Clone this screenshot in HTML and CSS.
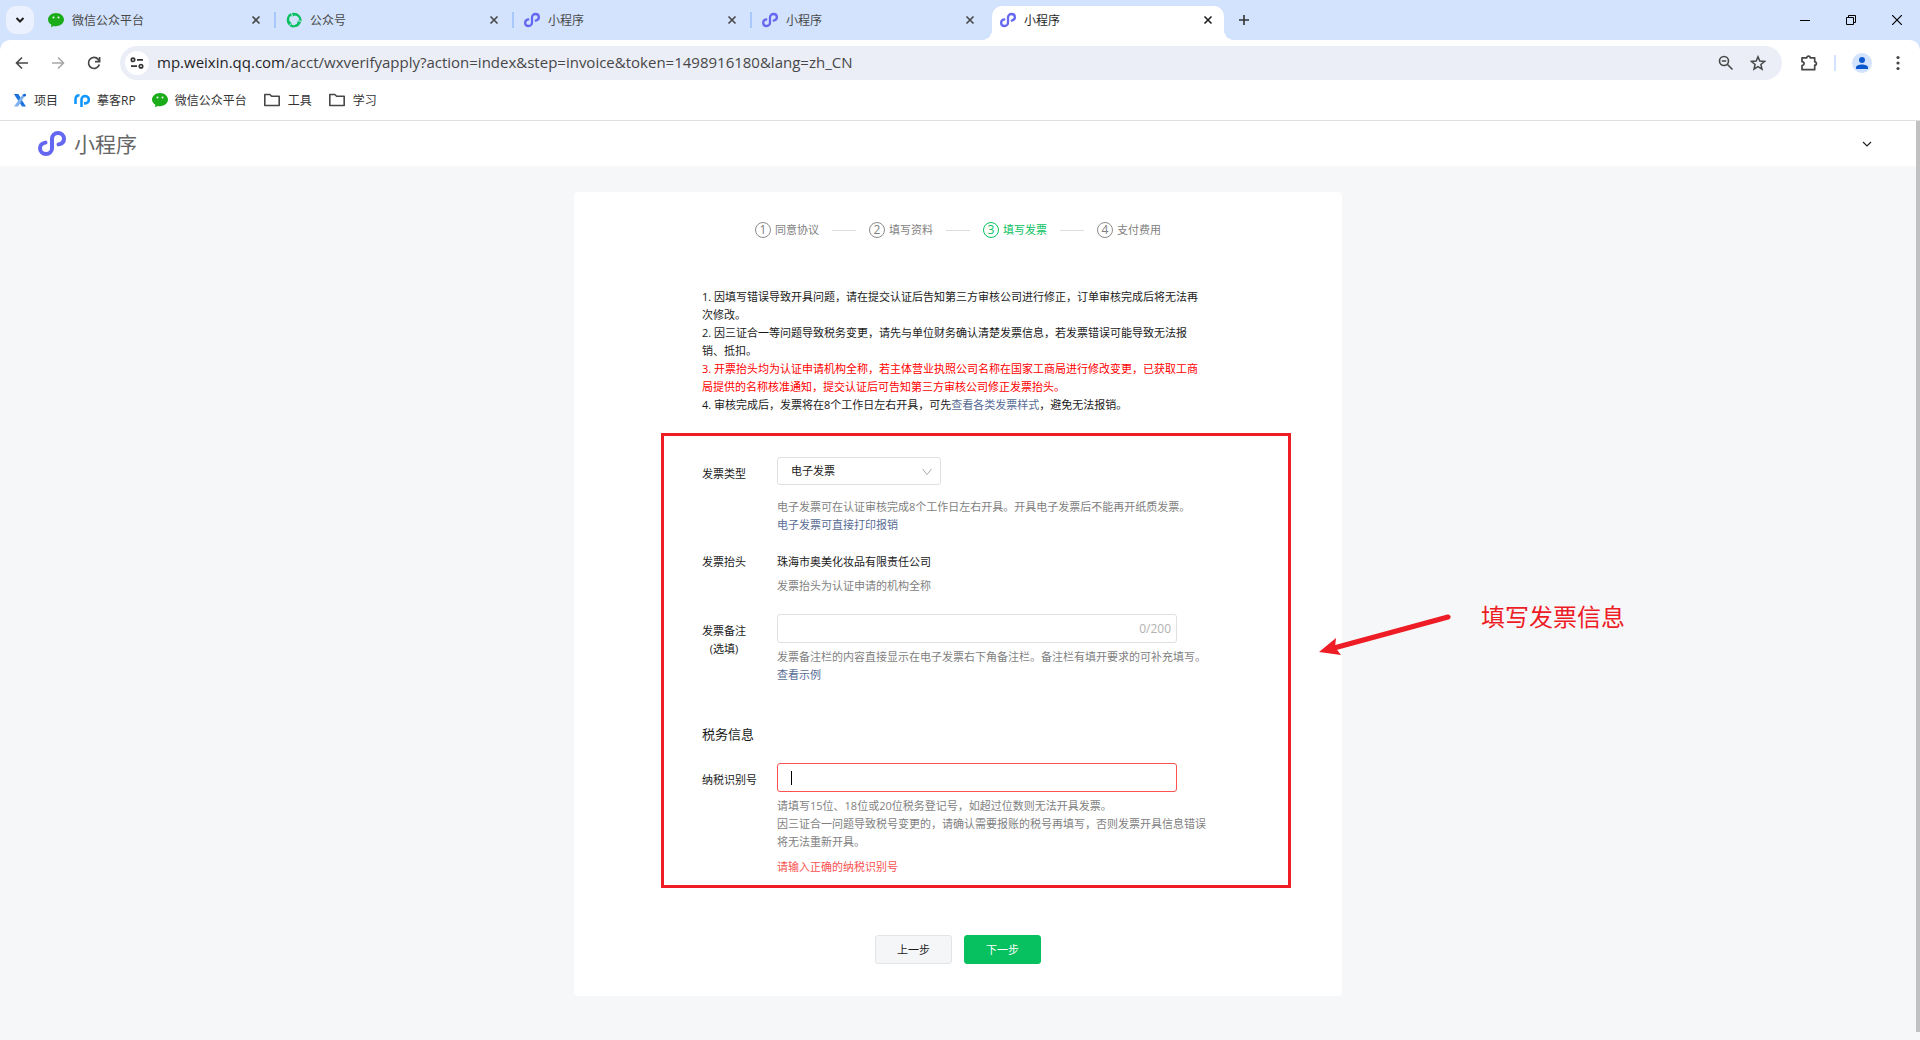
FILE: index.html
```html
<!DOCTYPE html>
<html lang="zh-CN">
<head>
<meta charset="utf-8">
<title>小程序</title>
<link rel="stylesheet" href="styles.css">
</head>
<body>
<svg class="sprite" aria-hidden="true">
  <symbol id="wechat" viewBox="0 0 16 16">
    <path fill="#1aad19" d="M8 1c4.400 0 8 2.900 8 6.600s-3.600 6.600-8 6.600c-.8 0-1.600-.1-2.300-.3L3 15.200l.4-2.400C1.300 11.600 0 9.700 0 7.600 0 3.900 3.600 1 8 1z"/>
    <circle cx="5.500" cy="5.500" r="1" fill="#fff"/><circle cx="10.500" cy="5.500" r="1" fill="#fff"/>
  </symbol>
  <symbol id="mini" viewBox="0 0 28 25">
    <path fill="none" stroke="#6467f0" stroke-width="4" stroke-linecap="round" d="M20.500 13.400C24 12.800 26 10.500 26 7.800 26 4.500 23.400 2 20 2S14 4.600 14 7.800V17.200C14 20.400 11.400 23 8 23S2 20.500 2 17.200C2 14.500 4 12.200 7.500 11.600"/>
  </symbol>
  <symbol id="close" viewBox="0 0 10 10"><path d="M1.500 1.500l7 7M8.500 1.500l-7 7" stroke="currentColor" stroke-width="1.600" fill="none"/></symbol>
  <symbol id="folder" viewBox="0 0 18 14"><path d="M1.800 1.500h5l1.800 1.800h7.600v9.200H1.800z" fill="none" stroke="#474747" stroke-width="1.600" stroke-linejoin="round"/></symbol>
</svg>

<header class="browser">
  <div class="tabstrip">
    <button class="tab-search" aria-label="搜索标签页"><svg width="10" height="8" viewBox="0 0 10 8"><path d="M1.500 2L5 5.500 8.500 2" fill="none" stroke="#1f1f1f" stroke-width="2"/></svg></button>
    <nav class="tabs">
      <div class="tab"><svg class="favicon"><use href="#wechat"/></svg><span class="tab-title">微信公众平台</span><button class="tab-close" aria-label="关闭"><svg><use href="#close"/></svg></button></div>
      <div class="tab"><svg class="favicon" viewBox="0 0 16 16"><g fill="none" stroke="#07c160" stroke-width="2.200" stroke-linecap="round"><path d="M5 11.600C.2 9.500 1.400 2 7.600 1.800 9.600 1.700 11 2.400 11.800 3.400"/><path d="M5 11.600C.2 9.500 1.400 2 7.600 1.800 9.600 1.700 11 2.400 11.800 3.400" transform="rotate(120 8 8)"/><path d="M5 11.600C.2 9.500 1.400 2 7.600 1.800 9.600 1.700 11 2.400 11.800 3.400" transform="rotate(240 8 8)"/></g><g stroke="#d3e3fd" stroke-width="1"><path d="M3.500 13.500L6.500 9.800"/><path d="M3.500 13.500L6.500 9.800" transform="rotate(120 8 8)"/><path d="M3.500 13.500L6.500 9.800" transform="rotate(240 8 8)"/></g></svg><span class="tab-title">公众号</span><button class="tab-close" aria-label="关闭"><svg><use href="#close"/></svg></button></div>
      <div class="tab"><svg class="favicon"><use href="#mini"/></svg><span class="tab-title">小程序</span><button class="tab-close" aria-label="关闭"><svg><use href="#close"/></svg></button></div>
      <div class="tab tab-last"><svg class="favicon"><use href="#mini"/></svg><span class="tab-title">小程序</span><button class="tab-close" aria-label="关闭"><svg><use href="#close"/></svg></button></div>
      <div class="tab tab-active"><svg class="favicon"><use href="#mini"/></svg><span class="tab-title">小程序</span><button class="tab-close" aria-label="关闭"><svg><use href="#close"/></svg></button></div>
    </nav>
    <button class="tab-new" aria-label="新标签页"><svg width="12" height="12" viewBox="0 0 12 12"><path d="M6 1v10M1 6h10" stroke="#333" stroke-width="1.600"/></svg></button>
    <div class="window-controls">
      <button aria-label="最小化"><svg width="10" height="10" viewBox="0 0 10 10"><path d="M0 5.500h10" stroke="#000"/></svg></button>
      <button aria-label="还原"><svg width="10" height="10" viewBox="0 0 10 10"><path d="M.5 2.500h7v7h-7zM2.500 2.500v-2h7v7h-2" fill="none" stroke="#000"/></svg></button>
      <button aria-label="关闭窗口"><svg width="10" height="10" viewBox="0 0 10 10"><path d="M0 0l10 10M10 0L0 10" stroke="#000" stroke-width="1.200"/></svg></button>
    </div>
  </div>

  <div class="toolbar">
    <button class="tool" aria-label="后退"><svg width="14" height="14" viewBox="0 0 14 14"><path d="M13 7H2M7 1.500L1.500 7 7 12.500" fill="none" stroke="#474747" stroke-width="1.600"/></svg></button>
    <button class="tool" aria-label="前进"><svg width="14" height="14" viewBox="0 0 14 14"><path d="M1 7h11M7 1.500L12.500 7 7 12.500" fill="none" stroke="#a8a8a8" stroke-width="1.600"/></svg></button>
    <button class="tool" aria-label="重新加载"><svg width="14" height="14" viewBox="0 0 14 14"><path d="M12.300 8.500A5.500 5.500 0 1 1 11.200 3.400L12.500 5" fill="none" stroke="#474747" stroke-width="1.700"/><path d="M12.600 1v4.600H8" fill="none" stroke="#474747" stroke-width="1.700"/></svg></button>
    <div class="omnibox">
      <button class="site-info" aria-label="网站信息"><svg width="14" height="12" viewBox="0 0 14 12"><g fill="none" stroke="#333" stroke-width="1.700"><circle cx="3" cy="2.800" r="1.700"/><path d="M7 2.800h6M1 9.200h6"/><circle cx="11" cy="9.200" r="1.700"/></g></svg></button>
      <p class="url"><span class="host">mp.weixin.qq.com</span>/acct/wxverifyapply?action=index&amp;step=invoice&amp;token=1498916180&amp;lang=zh_CN</p>
      <button class="omni-btn" aria-label="缩放"><svg width="16" height="16" viewBox="0 0 16 16"><g fill="none" stroke="#474747" stroke-width="1.600"><circle cx="6" cy="6" r="4.500"/><path d="M9.500 9.500l5 5M3.800 6h4.400"/></g></svg></button>
      <button class="omni-btn" aria-label="收藏"><svg width="16" height="16" viewBox="0 0 16 16"><path d="M8 1.800l1.800 4.300 4.700.4-3.600 3 1.100 4.600L8 11.700l-4 2.400 1.100-4.600-3.600-3 4.700-.4z" fill="none" stroke="#474747" stroke-width="1.500"/></svg></button>
    </div>
    <button class="tool ext" aria-label="扩展程序"><svg width="18" height="18" viewBox="0 0 18 18"><path d="M2 3.800h4.800a1.700 1.700 0 0 1 3.400 0h4.500v4a1.700 1.700 0 0 1 0 3.400v4.500H2v-4.200c2.800-.4 2.800-3.400 0-3.800z" fill="none" stroke="#474747" stroke-width="1.700" stroke-linejoin="round"/></svg></button>
    <span class="tool-sep"></span>
    <button class="avatar" aria-label="个人资料"><svg width="20" height="20" viewBox="0 0 20 20"><circle cx="10" cy="10" r="10" fill="#d3e3fd"/><circle cx="10" cy="7" r="3" fill="#0b57d0"/><path d="M4 16v-1.500c0-2 3-3 6-3s6 1 6 3V16z" fill="#0b57d0"/></svg></button>
    <button class="tool menu" aria-label="菜单"><svg width="4" height="16" viewBox="0 0 4 16"><g fill="#474747"><circle cx="2" cy="2.500" r="1.600"/><circle cx="2" cy="8" r="1.600"/><circle cx="2" cy="13.500" r="1.600"/></g></svg></button>
  </div>

  <nav class="bookmarks">
    <a href="#"><svg width="14" height="14" viewBox="0 0 14 14"><path d="M1 1h4.200l2.300 3.600-2 3z" fill="#1565d8"/><path d="M5 1l8 12.500H9L2 2.500z" fill="#1c74dd"/><path d="M1 13.500L10 1h3L5.200 13.500z" fill="#7fb2ee"/><circle cx="11.600" cy="2.200" r="1.400" fill="#1565d8"/></svg>项目</a>
    <a href="#"><svg width="16" height="14" viewBox="0 0 16 14"><g fill="none" stroke="#1296ff" stroke-width="2.600"><path d="M1.500 11V6.500C1.500 3.500 3 2.300 5.500 2.300"/><path d="M7.500 14V6.500a3.700 3.700 0 1 1 3.700 3.900H10"/></g></svg>摹客RP</a>
    <a href="#"><svg width="16" height="16"><use href="#wechat"/></svg>微信公众平台</a>
    <a href="#" class="folder"><svg width="18" height="14"><use href="#folder"/></svg>工具</a>
    <a href="#" class="folder"><svg width="18" height="14"><use href="#folder"/></svg>学习</a>
  </nav>
</header>

<div class="viewport">
  <div class="page">
    <header class="site-header">
      <a class="brand" href="#"><svg width="28" height="25"><use href="#mini"/></svg>小程序</a>
      <button class="account" aria-label="账号菜单"><svg width="10" height="6" viewBox="0 0 10 6"><path d="M1 1l4 4 4-4" fill="none" stroke="#222" stroke-width="1.200"/></svg></button>
    </header>

    <main class="card">
      <ol class="steps">
        <li class="step"><i>1</i>同意协议</li>
        <li class="step"><i>2</i>填写资料</li>
        <li class="step step-current"><i>3</i>填写发票</li>
        <li class="step"><i>4</i>支付费用</li>
      </ol>

      <div class="notes">
        <p>1. 因填写错误导致开具问题，请在提交认证后告知第三方审核公司进行修正，订单审核完成后将无法再次修改。</p>
        <p>2. 因三证合一等问题导致税务变更，请先与单位财务确认清楚发票信息，若发票错误可能导致无法报销、抵扣。</p>
        <p class="note-alert">3. 开票抬头均为认证申请机构全称，若主体营业执照公司名称在国家工商局进行修改变更，已获取工商局提供的名称核准通知，提交认证后可告知第三方审核公司修正发票抬头。</p>
        <p>4. 审核完成后，发票将在8个工作日左右开具，可先<a href="#">查看各类发票样式</a>，避免无法报销。</p>
      </div>

      <form class="invoice">
        <div class="row">
          <label class="label" for="type">发票类型</label>
          <div class="field">
            <div class="select-box">
              <select id="type"><option>电子发票</option></select>
              <svg class="select-arrow" width="10" height="8" viewBox="0 0 10 8"><path d="M.5 1L5 6.500 9.500 1" fill="none" stroke="#aaa"/></svg>
            </div>
            <p class="hint hint-type">电子发票可在认证审核完成8个工作日左右开具。开具电子发票后不能再开纸质发票。<br><a href="#">电子发票可直接打印报销</a></p>
          </div>
        </div>

        <div class="row row-text">
          <span class="label">发票抬头</span>
          <div class="field">
            <p class="value">珠海市奥美化妆品有限责任公司</p>
            <p class="hint">发票抬头为认证申请的机构全称</p>
          </div>
        </div>

        <div class="row">
          <label class="label" for="remark">发票备注<br>(选填)</label>
          <div class="field">
            <div class="input-box">
              <input id="remark" type="text">
              <span class="counter">0/200</span>
            </div>
            <p class="hint">发票备注栏的内容直接显示在电子发票右下角备注栏。备注栏有填开要求的可补充填写。<br><a href="#">查看示例</a></p>
          </div>
        </div>

        <h2>税务信息</h2>

        <div class="row">
          <label class="label" for="taxid">纳税识别号</label>
          <div class="field">
            <div class="input-box input-error">
              <input id="taxid" type="text">
              <span class="caret"></span>
            </div>
            <p class="hint">请填写15位、18位或20位税务登记号，如超过位数则无法开具发票。<br>因三证合一问题导致税号变更的，请确认需要报账的税号再填写，否则发票开具信息错误将无法重新开具。</p>
            <p class="error">请输入正确的纳税识别号</p>
          </div>
        </div>
      </form>

      <div class="actions">
        <button class="btn" type="button">上一步</button>
        <button class="btn btn-primary" type="button">下一步</button>
      </div>

      <div class="callout">
        <svg width="136" height="46" viewBox="0 0 136 46"><path d="M130 6L16 37" stroke="#ee1c25" stroke-width="5" stroke-linecap="round"/><path d="M1 41L18 27 17 36 23 44z" fill="#ee1c25"/></svg>
        <span>填写发票信息</span>
      </div>
    </main>
  </div>
  <div class="scrollbar"><div class="thumb"></div></div>
</div>
</body>
</html>
```
FILE: styles.css
```css
* { box-sizing: border-box; }

body {
  margin: 0;
  min-height: 100vh;
  display: flex;
  flex-direction: column;
  font-family: "Open Sans", "Noto Sans CJK SC", sans-serif;
  font-size: 12px;
  color: #1f1f1f;
  background: #fff;
}

p, h2, ol { margin: 0; padding: 0; font-weight: normal; }
a { color: inherit; text-decoration: none; }
svg { display: block; flex: none; }
button {
  border: 0;
  padding: 0;
  background: none;
  font: inherit;
  color: inherit;
  display: flex;
  align-items: center;
  justify-content: center;
}
.sprite { position: absolute; width: 0; height: 0; }

/* Browser chrome */
.browser { border-bottom: 1px solid #dfdfdf; background: #d3e3fd; }

.tabstrip {
  display: flex;
  height: 40px;
  padding-left: 6px;
}
.tab-search {
  width: 28px;
  height: 28px;
  margin: 6px 6px 0 0;
  border-radius: 10px;
  background: #ebf1fe;
}
.tabs { display: flex; padding-top: 6px; }
.tab {
  position: relative;
  display: flex;
  align-items: center;
  width: 238px;
  padding: 0 14px 6px 8px;
  color: #474747;
}
.tab:not(.tab-last):not(.tab-active)::after {
  content: "";
  position: absolute;
  left: 234px;
  top: 6px;
  width: 2px;
  height: 16px;
  background: #a8c7fa;
}
.favicon { width: 16px; height: 16px; margin-right: 8px; }
.tab-title { flex: 1; }
.tab-close { width: 16px; height: 16px; }
.tab-close svg { width: 10px; height: 10px; }
.tab-active {
  width: 232px;
  padding-right: 8px;
  background: #fff;
  border-radius: 10px 10px 0 0;
  color: #1f1f1f;
}
.tab-active::before,
.tab-active::after {
  content: "";
  position: absolute;
  bottom: 0;
  width: 10px;
  height: 10px;
}
.tab-active::before { left: -10px; background: radial-gradient(circle at 0 0, transparent 10px, #fff 10px); }
.tab-active::after { right: -10px; background: radial-gradient(circle at 100% 0, transparent 10px, #fff 10px); }
.tab-new { width: 28px; height: 28px; margin: 6px 0 0 6px; }
.window-controls { display: flex; margin-left: auto; }
.window-controls button { width: 46px; height: 40px; }

.toolbar {
  display: flex;
  align-items: center;
  height: 46px;
  padding: 0 8px 0 4px;
  background: #fff;
  border-radius: 10px 10px 0 0;
}
.tool { width: 36px; height: 28px; }
.omnibox {
  flex: 1;
  display: flex;
  align-items: center;
  height: 34px;
  margin-left: 8px;
  padding: 0 8px 0 5px;
  border-radius: 17px;
  background: #ebeef7;
}
.site-info { width: 24px; height: 24px; border-radius: 12px; background: #fff; }
.url {
  flex: 1;
  margin-left: 8px;
  padding-bottom: 2px;
  font-size: 15px;
  line-height: 24px;
  color: #474747;
}
.host { color: #1f1f1f; }
.omni-btn { width: 32px; height: 28px; }
.ext { margin-left: 9px; }
.tool-sep { width: 2px; height: 16px; margin: 0 16px 0 7px; background: #d3e3fd; }
.avatar { width: 20px; height: 20px; }
.menu { width: 28px; margin-left: 12px; }

.bookmarks {
  display: flex;
  align-items: center;
  gap: 16px;
  height: 34px;
  padding: 0 13px 6px;
  background: #fff;
  color: #333;
}
.bookmarks a { display: flex; align-items: center; gap: 7px; }

/* Page */
.viewport { flex: 1; display: flex; background: #f5f7f9; }
.page { flex: 1; color: #1a1a1a; font-size: 11px; line-height: 18px; }
.scrollbar { width: 4px; padding-bottom: 8px; display: flex; }
.thumb { flex: 1; background: #c1c1c1; }

.site-header {
  display: flex;
  align-items: center;
  justify-content: space-between;
  height: 45px;
  padding: 0 39px 0 38px;
  background: #fff;
}
.brand {
  display: flex;
  align-items: center;
  gap: 8px;
  font-size: 21px;
  line-height: 24px;
  color: #666;
}
.account { width: 20px; height: 20px; }

.card {
  position: relative;
  width: 768px;
  margin: 26px auto 40px;
  padding: 29px 51px 32px 87px;
  border-radius: 4px;
  background: #fff;
}

.steps {
  display: flex;
  justify-content: center;
  margin: 0 36px 0 0;
  list-style: none;
  color: #7f7f7f;
}
.step { display: flex; align-items: center; gap: 4px; }
.step + .step::before {
  content: "";
  width: 24px;
  height: 1px;
  margin: 0 9px 0 13px;
  background: #dcdcdc;
}
.step i {
  width: 16px;
  height: 16px;
  border: 1px solid #8c8c8c;
  border-radius: 8px;
  font-size: 12px;
  font-style: normal;
  line-height: 14px;
  text-align: center;
}
.step-current { color: #07c160; }
.step-current i { border-color: #07c160; }

.notes { width: 504px; margin: 49px 0 19px 41px; }
.note-alert { color: #f00; }
.notes a, .hint a { color: #576b95; }

.invoice {
  padding: 21px 34px 9px 38px;
  border: 3px solid #ee1c25;
}
.row { display: flex; }
.label {
  width: 75px;
  padding-top: 8px;
  white-space: nowrap;
}
.label[for="remark"] { padding-right: 31px; text-align: center; }
.field { width: 434px; }
.row-text { margin: 19px 0; }
.row-text .label { padding-top: 0; }
.row-text .hint { margin-top: 6px; }
.hint { margin-top: 5px; color: #7f7f7f; }
.hint-type { margin-top: 13px; }
.error { margin-top: 7px; color: #fa5151; }

.select-box { position: relative; width: 164px; }
.select-box select {
  appearance: none;
  display: block;
  width: 100%;
  height: 28px;
  padding: 0 30px 0 13px;
  border: 1px solid #e0e0e0;
  border-radius: 3px;
  background: #fff;
  font: inherit;
  color: #1a1a1a;
}
.select-arrow { position: absolute; right: 9px; top: 11px; }

.input-box {
  position: relative;
  display: flex;
  align-items: center;
  width: 400px;
  height: 29px;
  padding: 0 5px 0 13px;
  border: 1px solid #e0e0e0;
  border-radius: 3px;
}
.input-box input {
  flex: 1;
  min-width: 0;
  border: 0;
  padding: 0;
  outline: 0;
  background: none;
  font: inherit;
}
.counter { font-size: 12px; color: #b2b2b2; }
.input-error { border-color: #fa5151; }
.caret { position: absolute; left: 13px; top: 7px; width: 1px; height: 14px; background: #000; }

.invoice h2 { margin: 41px 0 20px; font-size: 13px; line-height: 18px; }

.actions {
  display: flex;
  justify-content: center;
  gap: 12px;
  margin: 47px 36px 0 0;
}
.btn {
  width: 77px;
  height: 29px;
  border: 1px solid #e3e4e6;
  border-radius: 3px;
  background: #f5f6f8;
}
.btn-primary { border-color: #07c160; background: #07c160; color: #fff; }

/* Annotation beside the card */
.callout {
  position: absolute;
  left: 744px;
  top: 410px;
  display: flex;
  gap: 27px;
  font-size: 24px;
  line-height: 30px;
  color: #ee1c25;
  white-space: nowrap;
}
.callout svg { margin-top: 9px; }
```
